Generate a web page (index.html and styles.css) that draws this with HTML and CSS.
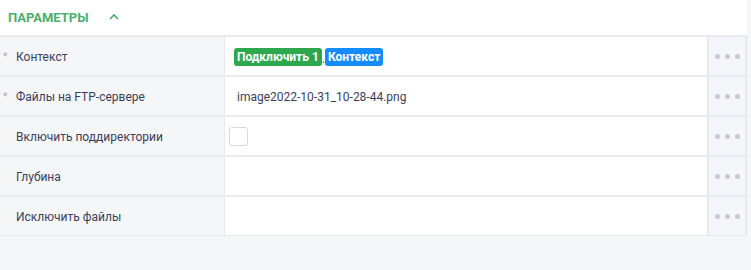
FILE: index.html
```html
<!DOCTYPE html>
<html lang="ru">
<head>
    <meta charset="UTF-8">
    <title>Параметры</title>
    <link rel="stylesheet" href="styles.css">
</head>
<body>
    <div class="panel">
        <div class="panel-header">
            <span class="panel-title">Параметры</span>
            <svg class="chevron" width="10" height="7" viewBox="0 0 10 7">
                <path d="M1 6 L5 2 L9 6" fill="none" stroke="#4caf6a" stroke-width="1.6"/>
            </svg>
        </div>
        <div class="params">
            <div class="row">
                <div class="label"><span class="req">*</span>Контекст</div>
                <div class="value">
                    <span class="tag tag-green">Подключить 1</span><span class="sep">.</span><span class="tag tag-blue">Контекст</span>
                </div>
                <div class="more"><i></i><i></i><i></i></div>
            </div>
            <div class="row">
                <div class="label"><span class="req">*</span>Файлы на FTP-сервере</div>
                <div class="value">image2022-10-31_10-28-44.png</div>
                <div class="more"><i></i><i></i><i></i></div>
            </div>
            <div class="row">
                <div class="label">Включить поддиректории</div>
                <div class="value"><span class="checkbox"></span></div>
                <div class="more"><i></i><i></i><i></i></div>
            </div>
            <div class="row">
                <div class="label">Глубина</div>
                <div class="value"></div>
                <div class="more"><i></i><i></i><i></i></div>
            </div>
            <div class="row">
                <div class="label">Исключить файлы</div>
                <div class="value"></div>
                <div class="more"><i></i><i></i><i></i></div>
            </div>
        </div>
    </div>
</body>
</html>
```

FILE: styles.css
```css
/* General styles */
body {
    margin: 0;
    font-family: Roboto, "Liberation Sans", sans-serif;
    font-size: 12px;
    color: #3b3e5c;
    background-color: #f5f6f8;
}

.panel {
    margin-right: 4px;
    background-color: #f5f6f8;
    height: 270px;
}

/* Header */
.panel-header {
    height: 35px;
    background-color: #fff;
    display: flex;
    align-items: center;
    padding-left: 8px;
    border-bottom: 1px solid #e8eaef;
}

.panel-title {
    text-transform: uppercase;
    font-weight: bold;
    font-size: 13px;
    color: #4caf6a;
}

.chevron {
    margin-left: 20px;
    margin-top: -3px;
}

/* Parameter rows */
.row {
    display: flex;
    height: 38px;
    border-top: 1px solid #e8eaf0;
    border-bottom: 1px solid #e8eaf0;
}

.label {
    width: 208px;
    padding: 2px 0 0 16px;
    display: flex;
    align-items: center;
    position: relative;
}

.req {
    position: absolute;
    left: 3px;
    top: 14px;
    font-size: 10px;
    color: #a4a7b8;
}

.value {
    flex: 1;
    background-color: #fff;
    border-left: 1px solid #e6e9f0;
    display: flex;
    align-items: center;
    padding: 2px 0 0 12px;
}

.tag {
    color: #fff;
    font-weight: bold;
    font-size: 12px;
    line-height: 18px;
    padding: 0 3px;
    border-radius: 3px;
}

.tag-green {
    background-color: #2ea84f;
    margin-left: -3px;
}

.tag-blue {
    background-color: #168cfa;
}

.sep {
    margin-top: 4px;
}

.checkbox {
    width: 17px;
    height: 17px;
    border: 1px solid #d6d9e4;
    border-radius: 3px;
    margin-left: -8px;
    margin-top: -2px;
}

.more {
    width: 36px;
    border-left: 2px solid #e6e9f0;
    border-right: 2px solid #e6e9f0;
    background-color: #f5f6f9;
    display: flex;
    align-items: center;
    justify-content: center;
    gap: 5px;
}

.more i {
    width: 5px;
    height: 5px;
    border-radius: 50%;
    background-color: #c6c9dc;
}
```
